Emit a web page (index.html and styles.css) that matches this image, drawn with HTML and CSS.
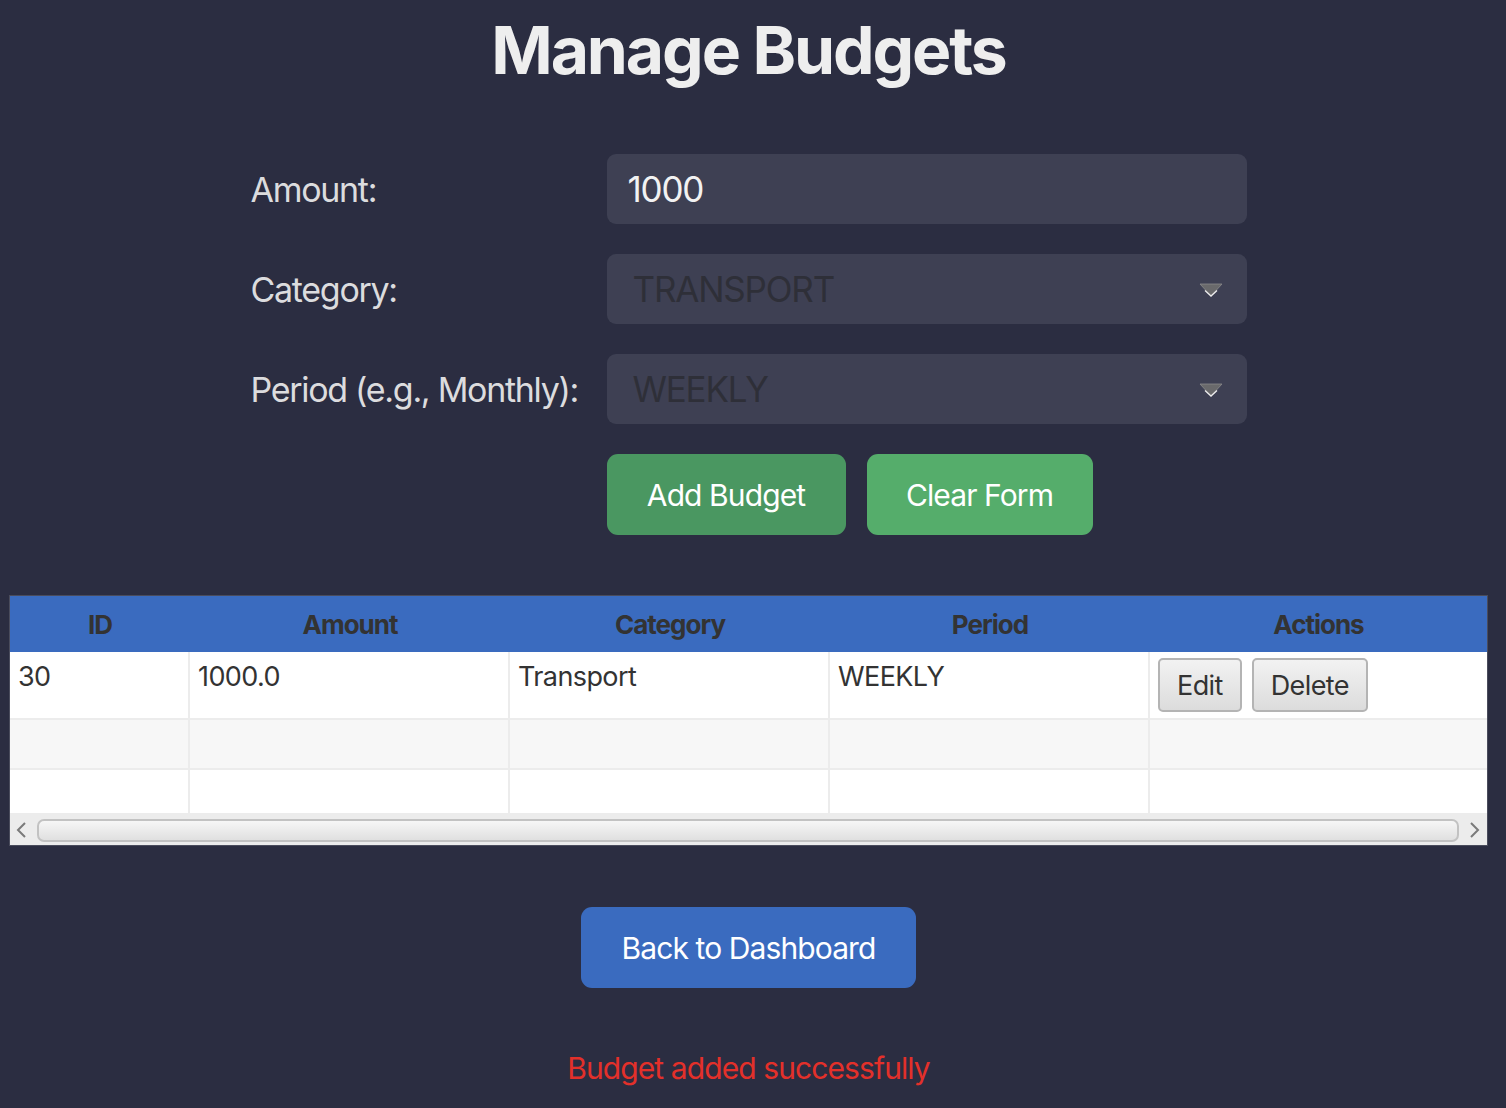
FILE: index.html
```html
<!DOCTYPE html>
<html>
<head>
<meta charset="utf-8">
<link rel="stylesheet" href="styles.css">
</head>
<body>
<div class="page">
  <h1 class="title">Manage Budgets</h1>
  <div class="form">
    <label class="label">Amount:</label>
    <div class="field"><span class="field-text value">1000</span></div>
    <label class="label">Category:</label>
    <div class="field select"><span class="field-text muted">TRANSPORT</span>
      <svg class="arrow" width="24" height="14" viewBox="0 0 24 14"><polygon points="1,1 23,1 12,13" fill="#69696b" stroke="#8a8a8c" stroke-width="0.8"/><polyline points="6,7.5 12,13 18,7.5" fill="none" stroke="#eeeeee" stroke-width="1.3"/></svg>
    </div>
    <label class="label">Period (e.g., Monthly):</label>
    <div class="field select"><span class="field-text muted">WEEKLY</span>
      <svg class="arrow" width="24" height="14" viewBox="0 0 24 14"><polygon points="1,1 23,1 12,13" fill="#69696b" stroke="#8a8a8c" stroke-width="0.8"/><polyline points="6,7.5 12,13 18,7.5" fill="none" stroke="#eeeeee" stroke-width="1.3"/></svg>
    </div>
    <div></div>
    <div class="buttons">
      <button class="btn btn-add">Add Budget</button>
      <button class="btn btn-clear">Clear Form</button>
    </div>
  </div>

  <div class="table">
    <div class="thead">
      <div class="th c1">ID</div>
      <div class="th c2">Amount</div>
      <div class="th c3">Category</div>
      <div class="th c4">Period</div>
      <div class="th c5">Actions</div>
    </div>
    <div class="tr r1">
      <div class="td c1">30</div>
      <div class="td c2">1000.0</div>
      <div class="td c3">Transport</div>
      <div class="td c4">WEEKLY</div>
      <div class="td c5 actions"><button class="mini">Edit</button><button class="mini">Delete</button></div>
    </div>
    <div class="tr r2">
      <div class="td c1"></div><div class="td c2"></div><div class="td c3"></div><div class="td c4"></div><div class="td c5"></div>
    </div>
    <div class="tr r3">
      <div class="td c1"></div><div class="td c2"></div><div class="td c3"></div><div class="td c4"></div><div class="td c5"></div>
    </div>
    <div class="hscroll">
      <svg class="sarrow" width="12" height="18" viewBox="0 0 12 18"><polyline points="10,2 3,9 10,16" fill="none" stroke="#7a7a7a" stroke-width="2"/></svg>
      <div class="thumb"></div>
      <svg class="sarrow" width="12" height="18" viewBox="0 0 12 18"><polyline points="2,2 9,9 2,16" fill="none" stroke="#7a7a7a" stroke-width="2"/></svg>
    </div>
  </div>

  <div class="back-wrap"><button class="btn btn-back">Back to Dashboard</button></div>
  <div class="status">Budget added successfully</div>
</div>
</body>
</html>
```

FILE: styles.css
```css
* { box-sizing: border-box; }
html, body {
  margin: 0;
  padding: 0;
  background: #2b2d41;
  font-family: Inter, "Noto Sans", sans-serif;
}
.page {
  width: 1497px;
  height: 1108px;
  display: flex;
  flex-direction: column;
  align-items: center;
}
.title {
  margin: 12px 0 0;
  height: 102px;
  font-size: 66px;
  font-weight: 700;
  letter-spacing: -2.1px;
  color: #eeeeee;
  line-height: 76px;
}
.form {
  margin-top: 40px;
  display: grid;
  grid-template-columns: 356px 640px;
  row-gap: 30px;
  margin-left: 0;
}
.label {
  display: flex;
  align-items: center;
  height: 70px;
  font-size: 34px;
  letter-spacing: -1.3px;
  color: #dcdcde;
}
.field {
  height: 70px;
  background: #3e4053;
  border-radius: 9px;
  display: flex;
  align-items: center;
  padding: 0 21px;
  position: relative;
}
.field.select { padding-left: 26px; }
.field-text { font-size: 35px; letter-spacing: -1.2px; }
.value { color: #f2f2f2; }
.muted { color: #2e2f38; }
.arrow { position: absolute; right: 24px; top: 29px; }
.buttons {
  display: flex;
  gap: 21px;
  height: 81px;
}
.btn {
  border: none;
  border-radius: 11px;
  color: #ffffff;
  font-family: Inter, "Noto Sans", sans-serif;
  font-size: 30px;
  letter-spacing: -0.9px;
  height: 81px;
  padding: 0;
}
.btn-add { width: 239px; background: #4a9761; }
.btn-clear { width: 226px; background: #55ad6b; }

.table {
  margin-top: 60px;
  width: 1479px;
  border: 1px solid #4a4c5c;
  background: #ffffff;
  display: flex;
  flex-direction: column;
}
.thead {
  display: flex;
  height: 56px;
  background: #3a6bbf;
}
.th {
  display: flex;
  align-items: center;
  justify-content: center;
  font-size: 26px;
  font-weight: 700;
  letter-spacing: -1px;
  color: #333333;
}
.c1 { width: 180px; }
.c2 { width: 320px; }
.c3 { width: 320px; }
.c4 { width: 320px; }
.c5 { flex: 1; }
.tr { display: flex; border-bottom: 2px solid #ececec; }
.r1 { height: 68px; background: #ffffff; }
.r2 { height: 50px; background: #f7f7f7; }
.r3 { height: 45px; background: #ffffff; }
.td {
  border-right: 2px solid #ececec;
  padding: 8px 8px 0;
  font-size: 27px;
  letter-spacing: -0.6px;
  color: #333333;
}
.td.c5 { border-right: none; }
.actions { display: flex; gap: 10px; padding-top: 6px; }
.mini {
  height: 54px;
  padding: 0 17px;
  font-family: Inter, "Noto Sans", sans-serif;
  font-size: 27px;
  letter-spacing: -0.6px;
  color: #333333;
  border: 2px solid #b4b4b4;
  border-radius: 5px;
  background: linear-gradient(#f2f2f2, #dcdcdc);
}
.hscroll {
  height: 30px;
  background: #ececec;
  display: flex;
  align-items: center;
  padding: 0 6px 0 5px;
  gap: 10px;
}
.thumb {
  flex: 1;
  height: 23px;
  border: 2px solid #c2c2c2;
  border-radius: 7px;
  background: linear-gradient(#f6f6f6, #e0e0e0);
}
.back-wrap { margin-top: 61px; }
.btn-back { width: 335px; background: #3a6bbf; }
.status {
  margin-top: 62px;
  font-size: 30px;
  letter-spacing: -0.9px;
  color: #e3302a;
}
```
